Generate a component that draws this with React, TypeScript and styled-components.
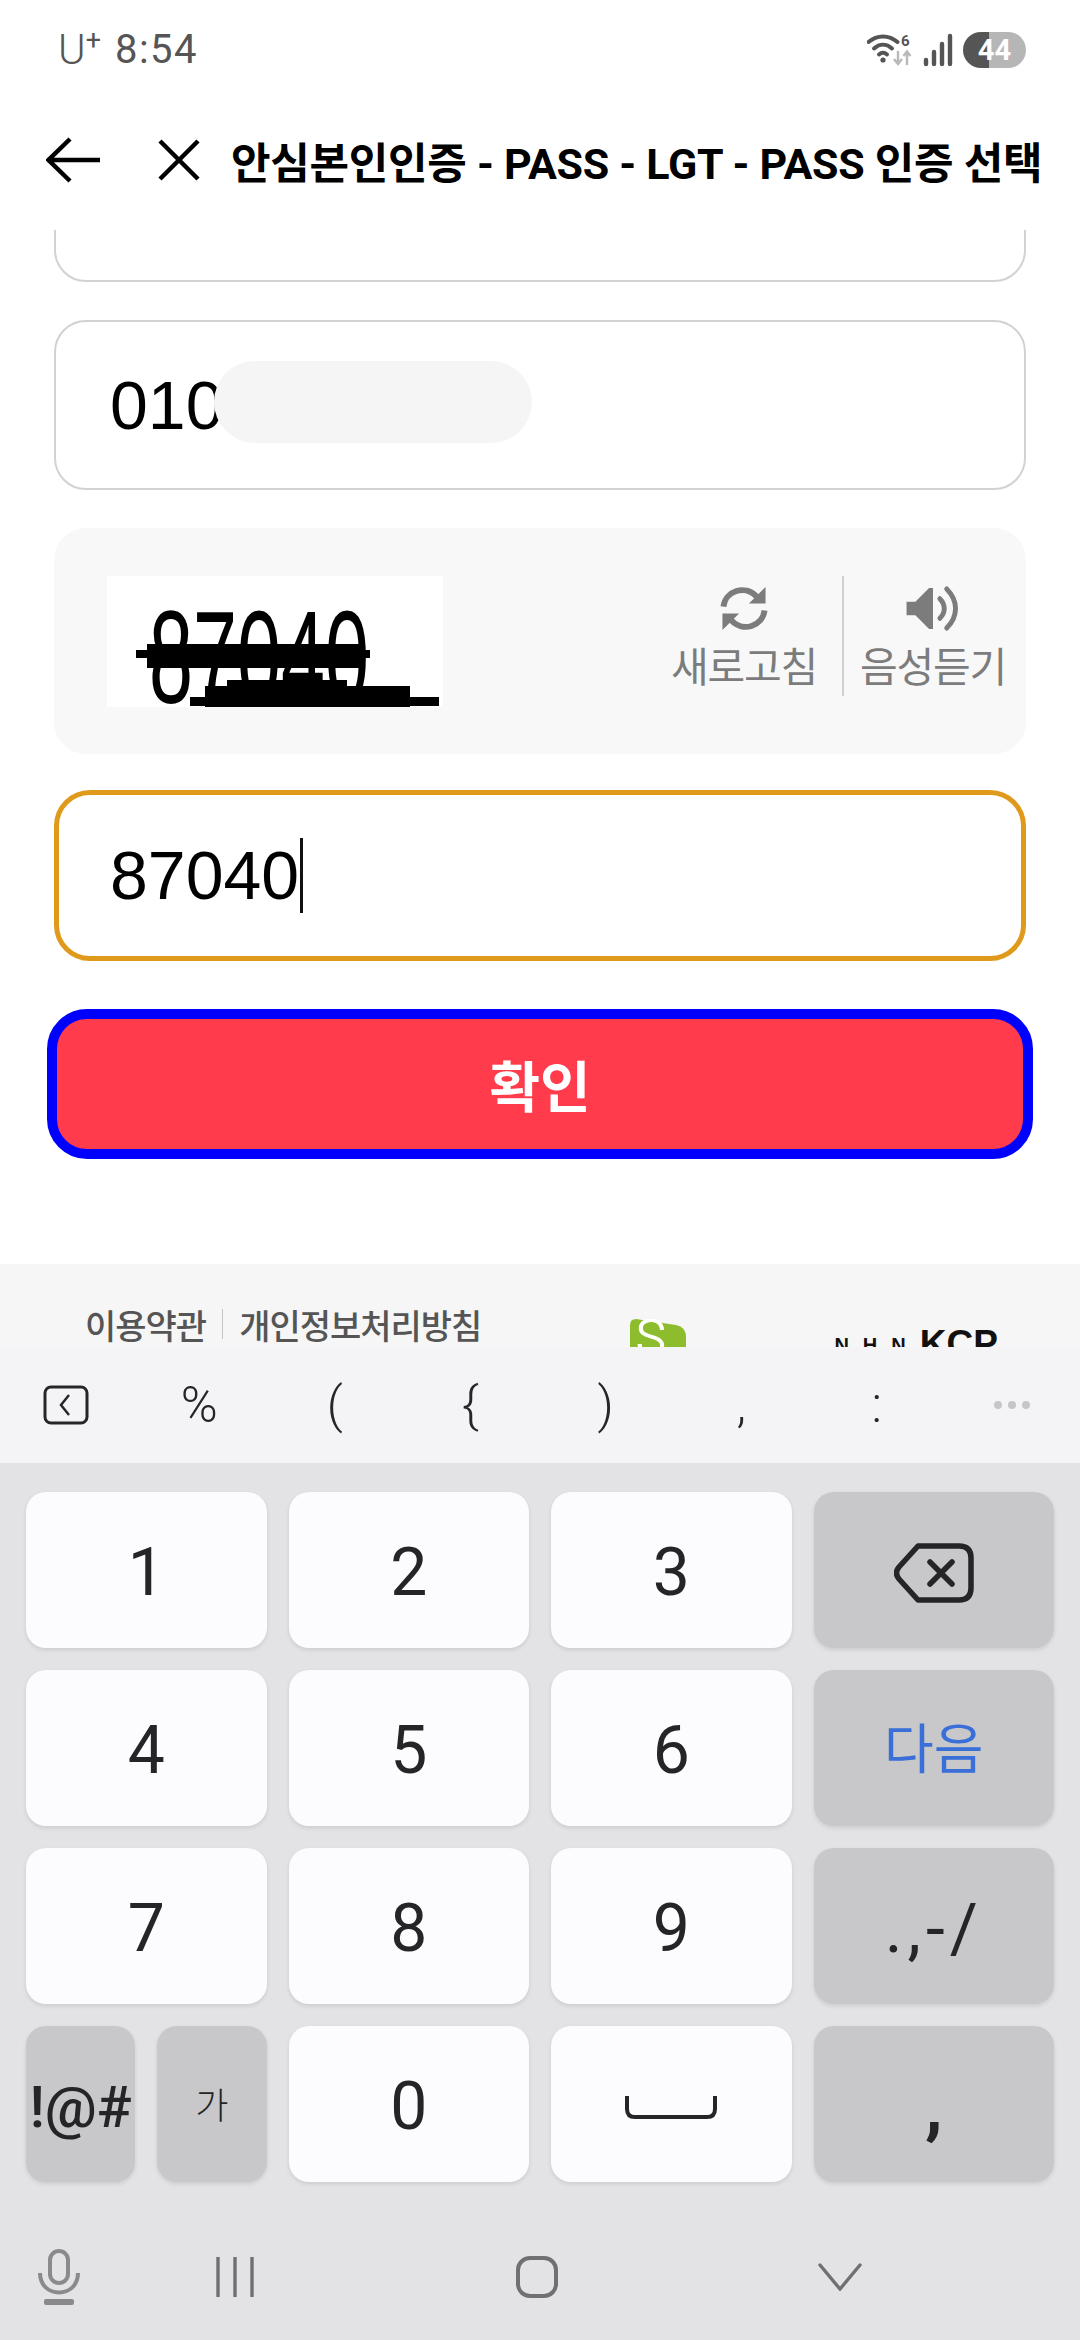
import React from 'react';
import styled, { createGlobalStyle } from 'styled-components';

const Global = createGlobalStyle`
  html, body { margin: 0; padding: 0; background: #fff; }
  * { box-sizing: border-box; }
  body { font-family: Roboto, "Noto Sans CJK KR", sans-serif; }
`;

const Page = styled.div`
  width: 1080px; height: 2340px; display: flex; flex-direction: column; overflow: hidden; background: #fff;
`;

const StatusBar = styled.div`
  height: 100px; display: flex; align-items: center; justify-content: space-between; padding: 0 54px 0 58px; color: #555;
`;
const Carrier = styled.div`display: flex; align-items: center; gap: 14px; font-size: 40px; font-weight: 400; letter-spacing: 1.5px;`;
const CarrierMark = styled.span`font-size: 42px; font-weight: 300; line-height: 1; letter-spacing: 0; sup { font-size: 27px; font-weight: 400; line-height: 0; vertical-align: 15px; }`;
const StatusIcons = styled.div`display: flex; align-items: center; gap: 10px;`;
const Battery = styled.div`
  width: 63px; height: 36px; border-radius: 18px; background: linear-gradient(90deg, #555 0 42%, #b6b6b6 42% 100%);
  color: #fff; font-size: 29px; font-weight: 700; display: flex; align-items: center; justify-content: center;
`;

const TopBar = styled.div`height: 130px; display: flex; align-items: center; padding: 0 0 10px 46px;`;
const BackIcon = styled.svg`width: 56px; height: 46px; flex: none;`;
const CloseIcon = styled.svg`width: 42px; height: 42px; flex: none; margin-left: 56px;`;
const Title = styled.div`margin-left: 31px; font-size: 43px; font-weight: 700; color: #000; white-space: nowrap; letter-spacing: -0.3px;`;

const Content = styled.div`
  height: 1035px; overflow: hidden; padding: 0 54px; display: flex; flex-direction: column;
`;
const Field = styled.div<{ $focused?: boolean }>`
  position: relative; height: ${p => (p.$focused ? 171 : 170)}px; flex: none; border-radius: ${p => (p.$focused ? 36 : 32)}px;
  border: ${p => (p.$focused ? '5px solid #df9a1b' : '2px solid #d2d2d4')};
  display: flex; align-items: center; padding-left: ${p => (p.$focused ? 51 : 54)}px;
  font-family: "Liberation Sans", sans-serif; font-size: 68px; color: #000; background: #fff;
`;
const CutField = styled(Field)`margin-top: -118px;`;
const Gap = styled.div<{ $h: number }>`height: ${p => p.$h}px; flex: none;`;
const Mask = styled.div`
  position: absolute; left: 158px; top: 39px; width: 318px; height: 82px; border-radius: 41px; background: #f5f5f6;
`;
const Caret = styled.span`display: inline-block; width: 3px; height: 75px; background: #111; margin-left: 1px;`;

const CaptchaPanel = styled.div`
  height: 226px; flex: none; border-radius: 32px; background: #f8f8f8; display: flex; align-items: flex-start; padding: 48px 18px 0 53px; margin-top: 38px;
`;
const CaptchaImage = styled.svg`width: 336px; height: 131px; flex: none; background: #fff; display: block;`;
const CaptchaActions = styled.div`margin-left: auto; display: flex; align-items: flex-start;`;
const CaptchaAction = styled.div`
  width: 150px; height: 120px; display: flex; flex-direction: column; align-items: center; color: #7c7c7c; font-size: 41px; letter-spacing: -1.2px; white-space: nowrap;
  svg { display: block; margin-top: 9px; height: 48px; margin-bottom: 8px; }
  span { line-height: 56px; }
`;
const ActionRule = styled.div`width: 2px; height: 120px; background: #cfcfcf; margin: 0 14px 0 23px;`;

const ConfirmButton = styled.div`
  height: 150px; flex: none; margin: 48px -7px 0; border-radius: 40px; border: 10px solid #0000ff; background: #ff3b4c; color: #fff;
  display: flex; align-items: center; justify-content: center; font-size: 55px; font-weight: 700; padding-bottom: 2px;
`;

const Footer = styled.div`
  height: 83px; overflow: hidden; background: #f6f6f7; display: flex; align-items: flex-start; padding: 38px 0 0 85px; flex: none;
`;
const Links = styled.div`display: flex; align-items: center; color: #555; font-size: 34px; font-weight: 500; letter-spacing: -1px; white-space: nowrap; height: 44px;`;
const LinkRule = styled.span`width: 1px; height: 30px; background: #c4c4c4; margin: 0 16px;`;
const GreenLogo = styled.svg`width: 56px; height: 56px; flex: none; margin-left: 149px; margin-top: 17px;`;
const KcpLogo = styled.div`
  margin-left: 148px; margin-top: 23px; display: flex; align-items: flex-start; color: #111; font-family: "Liberation Sans", sans-serif; font-weight: 700; white-space: nowrap; font-size: 37px; line-height: 37px;
`;
const KcpPrefix = styled.span`font-size: 20px; line-height: 20px; letter-spacing: 14px; margin-top: 10px;`;

const Toolbar = styled.div`
  height: 116px; flex: none; background: #f4f4f6; display: grid; grid-template-columns: repeat(8, 135.5px); align-items: center; justify-items: center; overflow: hidden;
`;
const ToolGlyph = styled.div`font-size: 50px; font-weight: 300; color: #262628; line-height: 1; margin-left: -8px;`;
const ToolIcon = styled.svg`width: 46px; height: 40px; margin-left: -3px;`;
const ToolDots = styled.svg`width: 38px; height: 10px; margin-left: -8px;`;

const Keyboard = styled.div`background: #e3e3e5; flex: 1; display: flex; flex-direction: column;`;
const KeyGrid = styled.div`
  padding: 29px 26px 0; display: grid; grid-template-columns: repeat(4, 1fr); grid-auto-rows: 156px; gap: 22px;
`;
const Key = styled.div<{ $fn?: boolean; $size?: number; $color?: string; $weight?: number; $spacing?: number }>`
  border-radius: 20px; background: ${p => (p.$fn ? '#c8c8ca' : '#fcfcfe')}; box-shadow: 0 2px 4px rgba(0,0,0,0.10);
  display: flex; align-items: center; justify-content: center; color: ${p => p.$color ?? '#252527'}; padding-top: 5px;
  font-size: ${p => p.$size ?? 66}px; font-weight: ${p => p.$weight ?? 400}; line-height: 1; white-space: nowrap; letter-spacing: ${p => p.$spacing ?? 0}px;
`;
const SplitCell = styled.div`display: grid; grid-template-columns: 1fr 1fr; gap: 22px;`;
const NavBar = styled.div`
  display: grid; grid-template-columns: 118px 234px 370px 236px; height: 126px; margin-top: 32px; align-items: center; justify-items: center;
`;
const NavIcon = styled.svg<{ $w: number; $h: number }>`width: ${p => p.$w}px; height: ${p => p.$h}px; display: block;`;

const Captcha = () => (
  <CaptchaImage viewBox="0 0 336 131">
    <text x="42" y="127" fontFamily="'Liberation Sans', sans-serif" fontSize="131" fontWeight="400" textLength="220" lengthAdjust="spacingAndGlyphs" fill="#000">87040</text>
    <rect x="29" y="74" width="234" height="8" fill="#000" />
    <rect x="40" y="68" width="214" height="24" fill="#000" />
    <rect x="98" y="110" width="205" height="21" fill="#000" />
    <rect x="83" y="121" width="249" height="9" fill="#000" />
    <rect x="120" y="104" width="120" height="8" fill="#000" />
  </CaptchaImage>
);

const RefreshIcon = () => (
  <svg width="50" height="48" viewBox="0 0 50 48" fill="none">
    <path d="M4 22C6 6 26 -1 38 12" stroke="#7c7c7c" strokeWidth="6" />
    <path d="M47 2V19H30Z" fill="#7c7c7c" />
    <path d="M46 26C44 42 24 49 12 36" stroke="#7c7c7c" strokeWidth="6" />
    <path d="M3 46V29H20Z" fill="#7c7c7c" />
  </svg>
);

const SpeakerIcon = () => (
  <svg width="56" height="48" viewBox="0 0 56 48" fill="none">
    <path d="M1 17H10L24 3H28V45H24L10 31H1Z" fill="#7c7c7c" />
    <path d="M35 14C41 20 41 28 35 34" stroke="#7c7c7c" strokeWidth="5" strokeLinecap="round" />
    <path d="M42 4C54 16 54 32 42 44" stroke="#7c7c7c" strokeWidth="5" strokeLinecap="round" />
  </svg>
);

const row1 = ['1', '2', '3'];
const row2 = ['4', '5', '6'];
const row3 = ['7', '8', '9'];

export default function App() {
  return (
    <Page>
      <Global />
      <StatusBar>
        <Carrier>
          <CarrierMark>U<sup>+</sup></CarrierMark>
          <span>8:54</span>
        </Carrier>
        <StatusIcons>
          <svg width="46" height="34" viewBox="0 0 46 34" fill="none">
            <path d="M1.5 9C10 1.5 22 1.5 30.5 9" stroke="#555" strokeWidth="4" strokeLinecap="round" />
            <path d="M7 15.5C12.5 10.5 19.5 10.5 25 15.5" stroke="#555" strokeWidth="4" strokeLinecap="round" />
            <path d="M12 21.5C14.8 19 17.2 19 20 21.5" stroke="#555" strokeWidth="4" strokeLinecap="round" />
            <circle cx="16" cy="27" r="2.6" fill="#555" />
            <text x="34" y="13" fontFamily="Roboto, sans-serif" fontSize="15" fontWeight="700" fill="#555">6</text>
            <path d="M31 18V30M27 26L31 31L35 26M40 32V19M36.5 23L40 18.5L43.5 23" stroke="#b9b9b9" strokeWidth="2.4" />
          </svg>
          <svg width="30" height="34" viewBox="0 0 30 34" fill="none">
            <path d="M3 31V27M11 31V19M19 31V11M27 31V3" stroke="#555" strokeWidth="4.4" strokeLinecap="round" />
          </svg>
          <Battery>44</Battery>
        </StatusIcons>
      </StatusBar>

      <TopBar>
        <BackIcon viewBox="0 0 56 46" fill="none">
          <path d="M54 23H3M24 2L2.5 23L24 44" stroke="#000" strokeWidth="4.5" />
        </BackIcon>
        <CloseIcon viewBox="0 0 42 42" fill="none">
          <path d="M2 2L40 40M40 2L2 40" stroke="#000" strokeWidth="4.5" />
        </CloseIcon>
        <Title>안심본인인증 - PASS - LGT - PASS 인증 선택</Title>
      </TopBar>

      <Content>
        <CutField />
        <Gap $h={38} />
        <Field>
          010.
          <Mask />
        </Field>
        <CaptchaPanel>
          <Captcha />
          <CaptchaActions>
            <CaptchaAction>
              <RefreshIcon />
              <span>새로고침</span>
            </CaptchaAction>
            <ActionRule />
            <CaptchaAction>
              <SpeakerIcon />
              <span>음성듣기</span>
            </CaptchaAction>
          </CaptchaActions>
        </CaptchaPanel>
        <Gap $h={36} />
        <Field $focused>
          87040<Caret />
        </Field>
        <ConfirmButton>확인</ConfirmButton>
      </Content>

      <Footer>
        <Links>
          <span>이용약관</span>
          <LinkRule />
          <span>개인정보처리방침</span>
        </Links>
        <GreenLogo viewBox="0 0 56 56">
          <path d="M6 0L46 6Q56 8 56 18V56H0V6Q0 0 6 0Z" fill="#8dbd2d" />
          <text x="6" y="36" fontFamily="Roboto, sans-serif" fontSize="50" fontWeight="300" fill="#fff" stroke="#fff" strokeWidth="1">S</text>
          <text x="30" y="50" fontFamily="Roboto, sans-serif" fontSize="30" fontWeight="300" fill="#fff">A</text>
        </GreenLogo>
        <KcpLogo><KcpPrefix>NHN</KcpPrefix>KCP</KcpLogo>
      </Footer>

      <Toolbar>
        <ToolIcon viewBox="0 0 46 40" fill="none">
          <rect x="2" y="2" width="42" height="36" rx="6" stroke="#262628" strokeWidth="3" />
          <path d="M26 10L18 20L26 30" stroke="#262628" strokeWidth="2.5" />
        </ToolIcon>
        {['%', '(', '{', ')', ',', ':'].map(g => (
          <ToolGlyph key={g}>{g}</ToolGlyph>
        ))}
        <ToolDots viewBox="0 0 38 10" fill="#c6c6c8">
          <circle cx="5" cy="5" r="4" />
          <circle cx="19" cy="5" r="4" />
          <circle cx="33" cy="5" r="4" />
        </ToolDots>
      </Toolbar>

      <Keyboard>
        <KeyGrid>
          {row1.map(k => <Key key={k}>{k}</Key>)}
          <Key $fn>
            <svg width="80" height="60" viewBox="0 0 80 60" fill="none">
              <path d="M24 3H65Q77 3 77 15V45Q77 57 65 57H24L5 36Q0 30 5 24Z" stroke="#252527" strokeWidth="5.5" strokeLinejoin="round" />
              <path d="M36 19L58 41M58 19L36 41" stroke="#252527" strokeWidth="5.5" strokeLinecap="round" />
            </svg>
          </Key>
          {row2.map(k => <Key key={k}>{k}</Key>)}
          <Key $fn $size={54} $color="#3a6fd8">다음</Key>
          {row3.map(k => <Key key={k}>{k}</Key>)}
          <Key $fn $size={68} $spacing={5}>.,-/</Key>
          <SplitCell>
            <Key $fn $size={58} $weight={500}>!@#</Key>
            <Key $fn $size={36} $weight={300}>가</Key>
          </SplitCell>
          <Key>0</Key>
          <Key>
            <svg width="92" height="24" viewBox="0 0 92 24" fill="none">
              <path d="M2 1V14Q2 22 10 22H82Q90 22 90 14V1" stroke="#252527" strokeWidth="4" />
            </svg>
          </Key>
          <Key $fn $size={72} $weight={700}>,</Key>
        </KeyGrid>
        <NavBar>
          <NavIcon $w={42} $h={56} viewBox="0 0 42 56" fill="none">
            <rect x="12" y="2" width="18" height="32" rx="9" stroke="#8a8a8c" strokeWidth="4" />
            <path d="M2 24C2 50 40 50 40 24" stroke="#8a8a8c" strokeWidth="4" />
            <rect x="6" y="50" width="30" height="6" rx="2" fill="#8a8a8c" />
          </NavIcon>
          <NavIcon $w={38} $h={40} viewBox="0 0 38 40" fill="none">
            <path d="M2 0V40M19 0V40M36 0V40" stroke="#707072" strokeWidth="3.4" strokeLinecap="round" />
          </NavIcon>
          <NavIcon $w={42} $h={42} viewBox="0 0 42 42" fill="none">
            <rect x="2" y="2" width="38" height="38" rx="12" stroke="#707072" strokeWidth="4" />
          </NavIcon>
          <NavIcon $w={44} $h={28} viewBox="0 0 44 28" fill="none">
            <path d="M2 2L22 26L42 2" stroke="#707072" strokeWidth="3.4" strokeLinecap="round" />
          </NavIcon>
        </NavBar>
      </Keyboard>
    </Page>
  );
}
